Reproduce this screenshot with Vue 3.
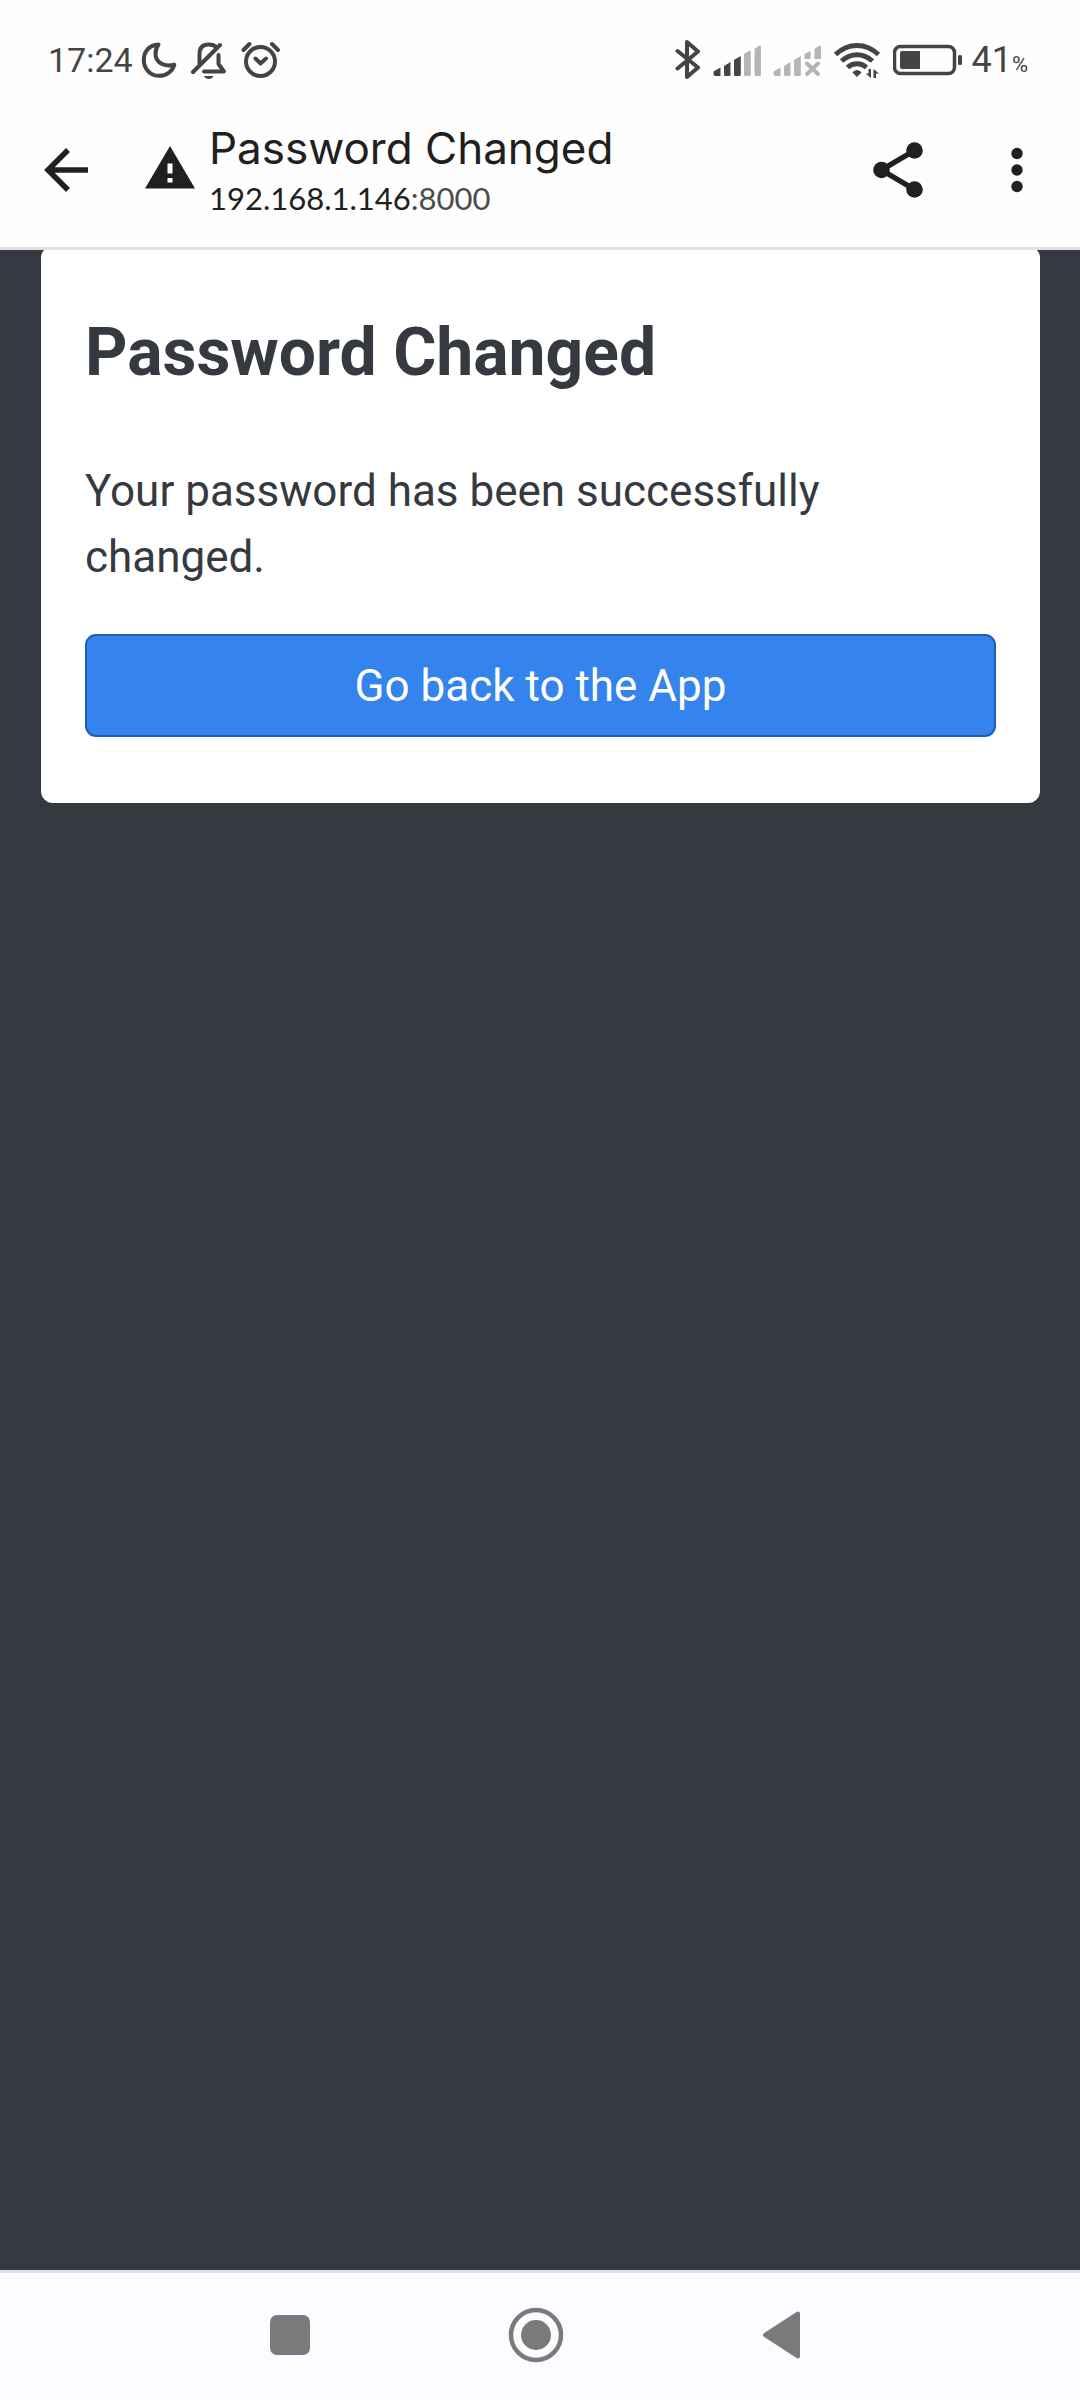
<script setup>
const host = '192.168.1.146'
const port = ':8000'
const title = 'Password Changed'
</script>

<template>
  <div class="screen">
    <header class="top">
      <div class="status">
        <div class="status-group left">
          <span class="clock">17:24</span>
          <svg class="moon" width="36" height="40" viewBox="141 40 36 40" fill="none" stroke="#444" stroke-width="4" stroke-linejoin="round">
            <path d="M158.500 44.500C149 45 143.800 52 143.800 60C143.800 69 150.500 75.800 159 75.800C167 75.800 172.500 71 174.300 64.600C163 67.500 155.500 61.500 155.500 54C155.500 49.500 156.500 47 158.500 44.500Z" />
          </svg>
          <svg class="bell" width="36" height="40" viewBox="192 40 36 40" fill="none" stroke="#444" stroke-width="4" stroke-linecap="round" stroke-linejoin="round">
            <path d="M200.500 63V54C200.500 47.500 204 44.500 209.500 44.500C212.500 44.500 215 45.200 216.500 46.500" />
            <path d="M194 72L221 45" />
            <path d="M219.500 55V64L225 71.500H205" />
            <path d="M205 76H214.500C213 80 206.500 80 205 76Z" fill="#444" stroke="none" />
          </svg>
          <svg class="alarm" width="40" height="40" viewBox="241 40 40 40" fill="none" stroke="#444" stroke-width="4">
            <circle cx="260.500" cy="61.500" r="14.500" />
            <path d="M255.500 58.500L260.500 63.500L266 58.500" stroke-linecap="round" stroke-linejoin="round" />
            <path d="M243.500 50L249.500 44M278 50L272 44" stroke-linecap="round" />
          </svg>
        </div>
        <div class="status-group right">
          <svg width="26" height="40" viewBox="674 40 26 40" fill="none" stroke="#444" stroke-width="4" stroke-linecap="round" stroke-linejoin="round">
            <path d="M676.500 51L697 67.500L686 77V42L697 51.500L676.500 68.500" />
          </svg>
          <svg class="signal" width="48" height="40" viewBox="713 40 48 40">
            <path fill="#444" d="M713.500 74V71.500L720.500 67.500V76H715Q713.500 75.500 713.500 74ZM724 66L730.500 62V75Q730.500 76 729 76H725.500Q724 76 724 74.500ZM734 60L740.800 56V75Q740.800 76 739 76H735.500Q734 76 734 74.500Z" />
            <path fill="#b5b5b5" d="M744 54L748.500 51Q750.800 50 750.800 52.500V75Q750.800 76 749 76H745.500Q744 76 744 74.500ZM754.500 49L758.500 46Q761 44.500 761 47V75Q761 76 759 76H756Q754.500 76 754.500 74.500Z" />
          </svg>
          <svg class="signal" width="48" height="40" viewBox="773 40 48 40">
            <path fill="#b5b5b5" d="M773.500 74V71.500L780.500 67.500V76H775Q773.500 75.500 773.500 74ZM784 66L790.500 62V75Q790.500 76 789 76H785.500Q784 76 784 74.500ZM794 60L800.800 56V75Q800.800 76 799 76H795.500Q794 76 794 74.500ZM804.500 54L810.500 51V59H804.500ZM814.500 49L818.500 46Q821 44.500 821 47V59H814.500Z" />
            <path fill="none" stroke="#b5b5b5" stroke-width="4" stroke-linecap="round" d="M807 63.500L818 74M818 63.500L807 74" />
          </svg>
          <svg class="wifi" width="48" height="40" viewBox="833 40 48 40" fill="none" stroke="#444" stroke-width="5">
            <path d="M835.500 54.500C848.500 42.500 865.500 42.500 878.500 54.500" />
            <path d="M841.500 61C851 52.500 863 52.500 872.500 61" />
            <path d="M847.500 67.500C853 62.500 861 62.500 866.500 67.500" />
            <path d="M852.500 72.500C855 69 859 69 861.500 72.500L857 77Z" fill="#444" stroke="none" />
            <path d="M871 69V78L865.500 73.500H868.500V69ZM873.500 78V69L879 73.500H876V78Z" fill="#444" stroke="none" />
          </svg>
          <svg class="battery" width="70" height="40" viewBox="895 40 70 40">
            <rect x="896.500" y="46.500" width="60" height="27" rx="6" fill="none" stroke="#444" stroke-width="3.500" />
            <path d="M904 51H922V69H904Q902 69 902 67V53Q902 51 904 51Z" fill="#444" />
            <rect x="960" y="55" width="4" height="10" rx="1.500" fill="#444" />
          </svg>
          <span class="charge">41<small>%</small></span>
        </div>
      </div>

      <div class="toolbar">
        <button type="button" class="icon-button back" aria-label="Back">
          <svg width="46" height="46" viewBox="43 147 46 46" fill="none" stroke="#202020" stroke-width="5.500">
            <path d="M88 170H48M68 150L48 170L68 190" />
          </svg>
        </button>
        <svg class="warning" width="50" height="46" viewBox="0 0 50 46">
          <path fill="#202020" fill-rule="evenodd" d="M25 -1L50 41.500H0ZM22.500 16.500V26.500H27.500V16.500ZM22.500 31V35.500H27.500V31Z" />
        </svg>
        <div class="location">
          <div class="page-title">{{ title }}</div>
          <div class="url">{{ host }}<span>{{ port }}</span></div>
        </div>
        <button type="button" class="icon-button share" aria-label="Share">
          <svg width="52" height="58" viewBox="872 141 52 58" fill="#202020">
            <path d="M914.500 150.500L881.500 170L914.500 189.500" fill="none" stroke="#202020" stroke-width="5.500" />
            <circle cx="881.500" cy="170" r="8.300" />
            <circle cx="914.500" cy="150.500" r="8.300" />
            <circle cx="914.500" cy="189.500" r="8.300" />
          </svg>
        </button>
        <button type="button" class="icon-button more" aria-label="More options">
          <svg width="12" height="46" viewBox="1011 147 12 46" fill="#202020">
            <circle cx="1017" cy="153.500" r="5.700" />
            <circle cx="1017" cy="170" r="5.700" />
            <circle cx="1017" cy="186.500" r="5.700" />
          </svg>
        </button>
      </div>
    </header>

    <main class="content">
      <section class="card">
        <h1>{{ title }}</h1>
        <p>Your password has been successfully changed.</p>
        <button type="button" class="primary">Go back to the App</button>
      </section>
    </main>

    <nav class="system-nav">
      <button type="button" class="icon-button" aria-label="Recent apps">
        <svg width="56" height="56" viewBox="0 0 56 56"><rect x="8" y="8" width="40" height="40" rx="7" fill="#7a7a7a" /></svg>
      </button>
      <button type="button" class="icon-button" aria-label="Home">
        <svg width="56" height="56" viewBox="0 0 56 56">
          <circle cx="28" cy="28" r="25" fill="none" stroke="#7a7a7a" stroke-width="4.500" />
          <circle cx="28" cy="28" r="15" fill="#7a7a7a" />
        </svg>
      </button>
      <button type="button" class="icon-button" aria-label="Back">
        <svg width="56" height="56" viewBox="0 0 56 56">
          <path d="M11 28L44 6.500V49.500Z" fill="#7a7a7a" stroke="#7a7a7a" stroke-width="4" stroke-linejoin="round" />
        </svg>
      </button>
    </nav>
  </div>
</template>

<style>
body {
  margin: 0;
}
</style>

<style scoped>
.screen {
  display: flex;
  flex-direction: column;
  min-height: 100vh;
  background: #353940;
  font-family: Roboto, sans-serif;
}

svg {
  display: block;
  flex: none;
}

.top {
  position: relative;
  z-index: 1;
  background: #fefefe;
  box-shadow: 0 3px #e0e0e0;
}

.status {
  display: flex;
  justify-content: space-between;
  padding: 40px 52px 0 48px;
  color: #444;
}

.status-group {
  display: flex;
  align-items: center;
  height: 40px;
}

.left svg + svg {
  margin-left: 14px;
}

.right {
  gap: 12px;
}

.clock,
.charge {
  font-size: 34px;
  line-height: 44px;
}

.clock {
  margin-right: 8px;
}

.charge {
  margin-left: -4px;
  font-size: 36px;
}

.charge small {
  font-size: 22px;
  line-height: 1;
}

.toolbar {
  display: flex;
  align-items: center;
  height: 154px;
  padding: 13px 57px 0 43px;
}

.icon-button {
  padding: 0;
  border: 0;
  background: none;
}

.warning {
  margin-left: 56px;
  overflow: visible;
}

.location {
  flex: 1;
  margin-left: 14px;
  color: #202020;
}

.page-title {
  font-family: Inter, sans-serif;
  font-size: 44px;
  line-height: 56px;
}

.url {
  font-family: Lato, sans-serif;
  font-size: 31px;
  line-height: 44px;
}

.url span {
  color: #4a4c4c;
}

.more {
  margin-left: 87px;
}

.content {
  flex: 1;
  margin-top: -1px;
  padding: 0 40px 0 41px;
}

.card {
  padding: 66px 44px;
  border-radius: 12px;
  background: #fff;
  color: #343a40;
}

h1 {
  margin: 0 0 64px;
  font-size: 66px;
  font-weight: 700;
  line-height: 82px;
}

p {
  margin: 0 0 44px;
  font-size: 44px;
  line-height: 66px;
}

.primary {
  display: block;
  width: 100%;
  height: 103px;
  border: 2px solid #1f5eb4;
  border-radius: 11px;
  background: #3584ed;
  color: #fff;
  font-family: inherit;
  font-size: 44px;
}

.system-nav {
  display: flex;
  justify-content: center;
  align-items: center;
  gap: 190px;
  height: 124px;
  padding: 0 8px 3px 0;
  border-top: 3px solid #e2e1ea;
  background: #fdfbff;
}
</style>
